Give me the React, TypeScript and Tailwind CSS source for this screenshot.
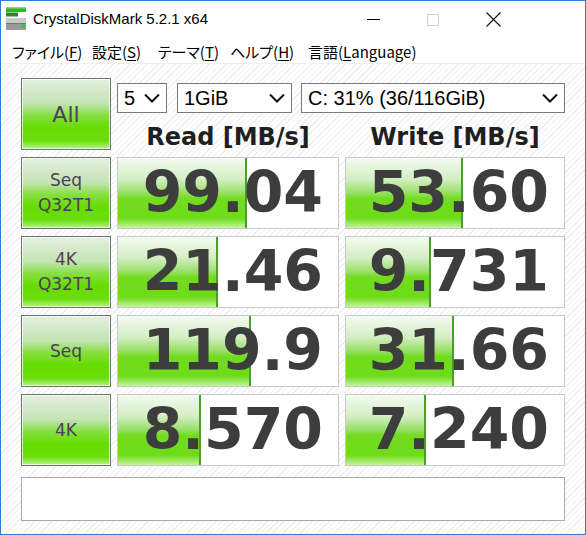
import React from "react";

interface ResultRow {
    label: string[];
    read: string;
    write: string;
}

const results: ResultRow[] = [
    { label: ["Seq", "Q32T1"], read: "99.04", write: "53.60" },
    { label: ["4K", "Q32T1"], read: "21.46", write: "9.731" },
    { label: ["Seq"], read: "119.9", write: "31.66" },
    { label: ["4K"], read: "8.570", write: "7.240" },
];

const menus = [
    { text: "ファイル", key: "F", w: "w-[80px]" },
    { text: "設定", key: "S", w: "w-[66px]" },
    { text: "テーマ", key: "T", w: "w-[72px]" },
    { text: "ヘルプ", key: "H", w: "w-[78px]" },
    { text: "言語", key: "L", rest: "anguage", w: "w-[120px]" },
];

// meter is drawn on a log scale, like the real app
const meterWidth = (v: string) => Math.max(0, 42.6 + 43.3 * Math.log10(parseFloat(v)));

const labelFont = "font-['DejaVu_Sans',sans-serif] text-[#4b3e5e]";

function GreenButton({ children }: { children: React.ReactNode }) {
    return (
        <div className="h-[72px] border border-[#6b7568] shadow-[inset_0_0_0_1px_rgba(255,255,255,0.7)] bg-[linear-gradient(to_bottom,#e4efe0_0%,#c4e4b4_35%,#86e040_52%,#66dc00_70%,#6ade0c_88%,#b6f288_100%)] flex flex-col items-center justify-center">
            {children}
        </div>
    );
}

function Meter({ value }: { value: string }) {
    return (
        <div className="relative h-[72px] border border-[#c9c9c9] bg-white overflow-hidden">
            <div
                className="absolute left-0 top-0 bottom-0 border-r-2 border-[#47a02c] bg-[linear-gradient(to_bottom,#f4faf1_0%,#d4efc4_30%,#9ee070_48%,#72dc20_58%,#6edc18_86%,#c4f49c_100%)]"
                style={{ width: meterWidth(value) }}
            />
            <div className="relative h-full flex items-center justify-end pr-[15px] pb-[2px] font-['DejaVu_Sans',sans-serif] font-bold text-[57px] leading-none text-[#3d3d3d]">
                {value}
            </div>
        </div>
    );
}

function Select({ value, w }: { value: string, w: string }) {
    return (
        <div className={`${w} h-[30px] border border-[#7a7a7a] bg-white flex items-center justify-between pl-[6px] pr-[6px] text-[20px] text-black`}>
            <span>{value}</span>
            <svg width="16" height="10" viewBox="0 0 16 10">
                <polyline points="1,1.5 8,8.5 15,1.5" fill="none" stroke="#111" strokeWidth="2" />
            </svg>
        </div>
    );
}

export default function App() {
    return (
        <div className="w-[586px] h-[535px] border border-[#2a7fd4] bg-white flex flex-col overflow-hidden font-['Liberation_Sans',sans-serif]">
            {/* title bar */}
            <div className="h-[37px] flex items-center shrink-0">
                <svg className="ml-[4px] mt-[-2px]" width="22" height="24" viewBox="0 0 22 24">
                    <rect x="1" y="0" width="20" height="5" fill="#2fb52f" />
                    <rect x="1" y="0" width="20" height="1.5" fill="#7fe07f" />
                    <rect x="1" y="5.5" width="12" height="4" fill="#1e8f26" />
                    <rect x="1" y="11" width="20" height="12" fill="#9a9a9a" />
                    <rect x="1" y="11" width="20" height="5" fill="#c9c9c9" />
                    <rect x="1" y="16" width="20" height="1" fill="#777" />
                    <rect x="16" y="17.5" width="4" height="3" fill="#32c832" />
                </svg>
                <span className="ml-[6px] text-[15px] text-black">CrystalDiskMark 5.2.1 x64</span>
                <div className="ml-auto flex pr-[62px] h-full">
                    <div className="w-[60px] flex items-center justify-center">
                        <div className="w-[13px] h-[1px] bg-black" />
                    </div>
                    <div className="w-[60px] flex items-center justify-center">
                        <div className="w-[12px] h-[12px] border border-[#cfcfcf]" />
                    </div>
                    <div className="w-[60px] flex items-center justify-center">
                        <svg width="15" height="15" viewBox="0 0 15 15">
                            <path d="M0.5 0.5 L14.5 14.5 M14.5 0.5 L0.5 14.5" stroke="#111" strokeWidth="1.1" />
                        </svg>
                    </div>
                </div>
            </div>

            {/* menu bar */}
            <div className="h-[26px] shrink-0 flex items-center pl-[11px] pt-[3px] text-[15px] text-black border-b border-[#f0f0f0] font-['Noto_Sans_CJK_JP',sans-serif] [font-feature-settings:'palt']">
                {menus.map(m => (
                    <span key={m.key} className={`${m.w} whitespace-nowrap`}>
                        {m.text}(<span className="underline underline-offset-2">{m.key}</span>{m.rest}
                        {m.rest ? ")" : ")"}
                    </span>
                ))}
            </div>

            {/* main panel */}
            <div className="flex-1 pl-[20px] pt-[14px] bg-[repeating-linear-gradient(135deg,#ffffff_0px,#ffffff_3px,#eeeeee_3px,#eeeeee_4px)]">
                <div className="grid grid-cols-[90px_222px_220px] gap-x-[6px] gap-y-[7px]">
                    <GreenButton>
                        <span className={`${labelFont} text-[22px]`}>All</span>
                    </GreenButton>
                    <div className="col-span-2 h-[72px] flex flex-col">
                        <div className="mt-[5px] flex">
                            <Select value="5" w="w-[51px]" />
                            <div className="ml-[10px]"><Select value="1GiB" w="w-[115px]" /></div>
                            <div className="ml-[9px]"><Select value="C: 31% (36/116GiB)" w="w-[264px]" /></div>
                        </div>
                        <div className="mt-[10px] grid grid-cols-[222px_220px] gap-x-[6px] h-[28px] items-center font-['DejaVu_Sans',sans-serif] font-bold text-[24px] leading-[28px] text-[#1f1f1f]">
                            <div className="text-center">Read [MB/s]</div>
                            <div className="text-center">Write [MB/s]</div>
                        </div>
                    </div>

                    {results.map(r => (
                        <React.Fragment key={r.label.join("-")}>
                            <GreenButton>
                                {r.label.map(l => (
                                    <span key={l} className={`${labelFont} text-[17px] leading-[25px]`}>{l}</span>
                                ))}
                            </GreenButton>
                            <Meter value={r.read} />
                            <Meter value={r.write} />
                        </React.Fragment>
                    ))}
                </div>

                <div className="mt-[11px] w-[544px] h-[44px] border border-[#a9a9a9] bg-white" />
            </div>
        </div>
    );
}
